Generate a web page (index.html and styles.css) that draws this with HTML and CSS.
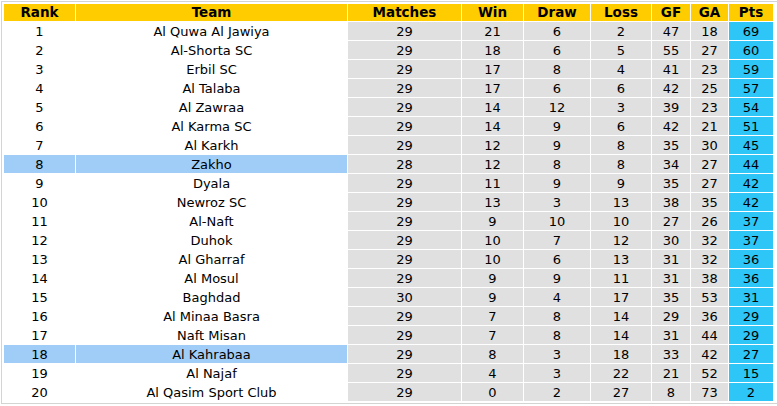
FILE: index.html
```html
<!DOCTYPE html>
<html>
<head>
<meta charset="utf-8">
<link rel="stylesheet" href="styles.css">
</head>
<body>
<div class="frame">
<table class="standings">
<colgroup>
<col class="c-rank"><col class="c-team"><col class="c-mp"><col class="c-win"><col class="c-draw"><col class="c-loss"><col class="c-gf"><col class="c-ga"><col class="c-pts">
</colgroup>
<thead>
<tr><th>Rank</th><th>Team</th><th>Matches</th><th>Win</th><th>Draw</th><th>Loss</th><th>GF</th><th>GA</th><th>Pts</th></tr>
</thead>
<tbody>
<tr><td class="n">1</td><td class="t">Al Quwa Al Jawiya</td><td>29</td><td>21</td><td>6</td><td>2</td><td>47</td><td>18</td><td class="p">69</td></tr>
<tr><td class="n">2</td><td class="t">Al-Shorta SC</td><td>29</td><td>18</td><td>6</td><td>5</td><td>55</td><td>27</td><td class="p">60</td></tr>
<tr><td class="n">3</td><td class="t">Erbil SC</td><td>29</td><td>17</td><td>8</td><td>4</td><td>41</td><td>23</td><td class="p">59</td></tr>
<tr><td class="n">4</td><td class="t">Al Talaba</td><td>29</td><td>17</td><td>6</td><td>6</td><td>42</td><td>25</td><td class="p">57</td></tr>
<tr><td class="n">5</td><td class="t">Al Zawraa</td><td>29</td><td>14</td><td>12</td><td>3</td><td>39</td><td>23</td><td class="p">54</td></tr>
<tr><td class="n">6</td><td class="t">Al Karma SC</td><td>29</td><td>14</td><td>9</td><td>6</td><td>42</td><td>21</td><td class="p">51</td></tr>
<tr><td class="n">7</td><td class="t">Al Karkh</td><td>29</td><td>12</td><td>9</td><td>8</td><td>35</td><td>30</td><td class="p">45</td></tr>
<tr class="hl"><td class="n">8</td><td class="t">Zakho</td><td>28</td><td>12</td><td>8</td><td>8</td><td>34</td><td>27</td><td class="p">44</td></tr>
<tr><td class="n">9</td><td class="t">Dyala</td><td>29</td><td>11</td><td>9</td><td>9</td><td>35</td><td>27</td><td class="p">42</td></tr>
<tr><td class="n">10</td><td class="t">Newroz SC</td><td>29</td><td>13</td><td>3</td><td>13</td><td>38</td><td>35</td><td class="p">42</td></tr>
<tr><td class="n">11</td><td class="t">Al-Naft</td><td>29</td><td>9</td><td>10</td><td>10</td><td>27</td><td>26</td><td class="p">37</td></tr>
<tr><td class="n">12</td><td class="t">Duhok</td><td>29</td><td>10</td><td>7</td><td>12</td><td>30</td><td>32</td><td class="p">37</td></tr>
<tr><td class="n">13</td><td class="t">Al Gharraf</td><td>29</td><td>10</td><td>6</td><td>13</td><td>31</td><td>32</td><td class="p">36</td></tr>
<tr><td class="n">14</td><td class="t">Al Mosul</td><td>29</td><td>9</td><td>9</td><td>11</td><td>31</td><td>38</td><td class="p">36</td></tr>
<tr><td class="n">15</td><td class="t">Baghdad</td><td>30</td><td>9</td><td>4</td><td>17</td><td>35</td><td>53</td><td class="p">31</td></tr>
<tr><td class="n">16</td><td class="t">Al Minaa Basra</td><td>29</td><td>7</td><td>8</td><td>14</td><td>29</td><td>36</td><td class="p">29</td></tr>
<tr><td class="n">17</td><td class="t">Naft Misan</td><td>29</td><td>7</td><td>8</td><td>14</td><td>31</td><td>44</td><td class="p">29</td></tr>
<tr class="hl"><td class="n">18</td><td class="t">Al Kahrabaa</td><td>29</td><td>8</td><td>3</td><td>18</td><td>33</td><td>42</td><td class="p">27</td></tr>
<tr><td class="n">19</td><td class="t">Al Najaf</td><td>29</td><td>4</td><td>3</td><td>22</td><td>21</td><td>52</td><td class="p">15</td></tr>
<tr><td class="n">20</td><td class="t">Al Qasim Sport Club</td><td>29</td><td>0</td><td>2</td><td>27</td><td>8</td><td>73</td><td class="p">2</td></tr>
</tbody>
</table>
</div>
</body>
</html>
```

FILE: styles.css
```css
html, body {
  margin: 0;
  padding: 0;
  background: #ffffff;
}

.frame {
  margin: 1px;
  width: 773px;
  border: 1px solid #d4d4d4;
  padding: 1px;
  background: #ffffff;
}

.standings {
  border-collapse: separate;
  border-spacing: 1px;
  table-layout: fixed;
  width: 771px;
  font-family: "DejaVu Sans", Tahoma, sans-serif;
  font-size: 13px;
  color: #000000;
}

.c-rank { width: 71px; }
.c-team { width: 271px; }
.c-mp { width: 113px; }
.c-win { width: 61px; }
.c-draw { width: 66px; }
.c-loss { width: 60px; }
.c-gf { width: 38px; }
.c-ga { width: 37px; }
.c-pts { width: 44px; }

.standings th {
  background: #ffcc00;
  font-weight: bold;
  font-size: 13.5px;
  height: 17px;
  padding: 0;
  text-align: center;
  line-height: 17px;
}

.standings td {
  background: #e0e0e0;
  height: 17px;
  padding: 1px 0 0 0;
  text-align: center;
  line-height: 17px;
  white-space: nowrap;
}

.standings td.n,
.standings td.t {
  background: #ffffff;
}

.standings td.p {
  background: #2ec5f7;
}

.standings tr.hl td.n,
.standings tr.hl td.t {
  background: #9fcdf7;
}
```
